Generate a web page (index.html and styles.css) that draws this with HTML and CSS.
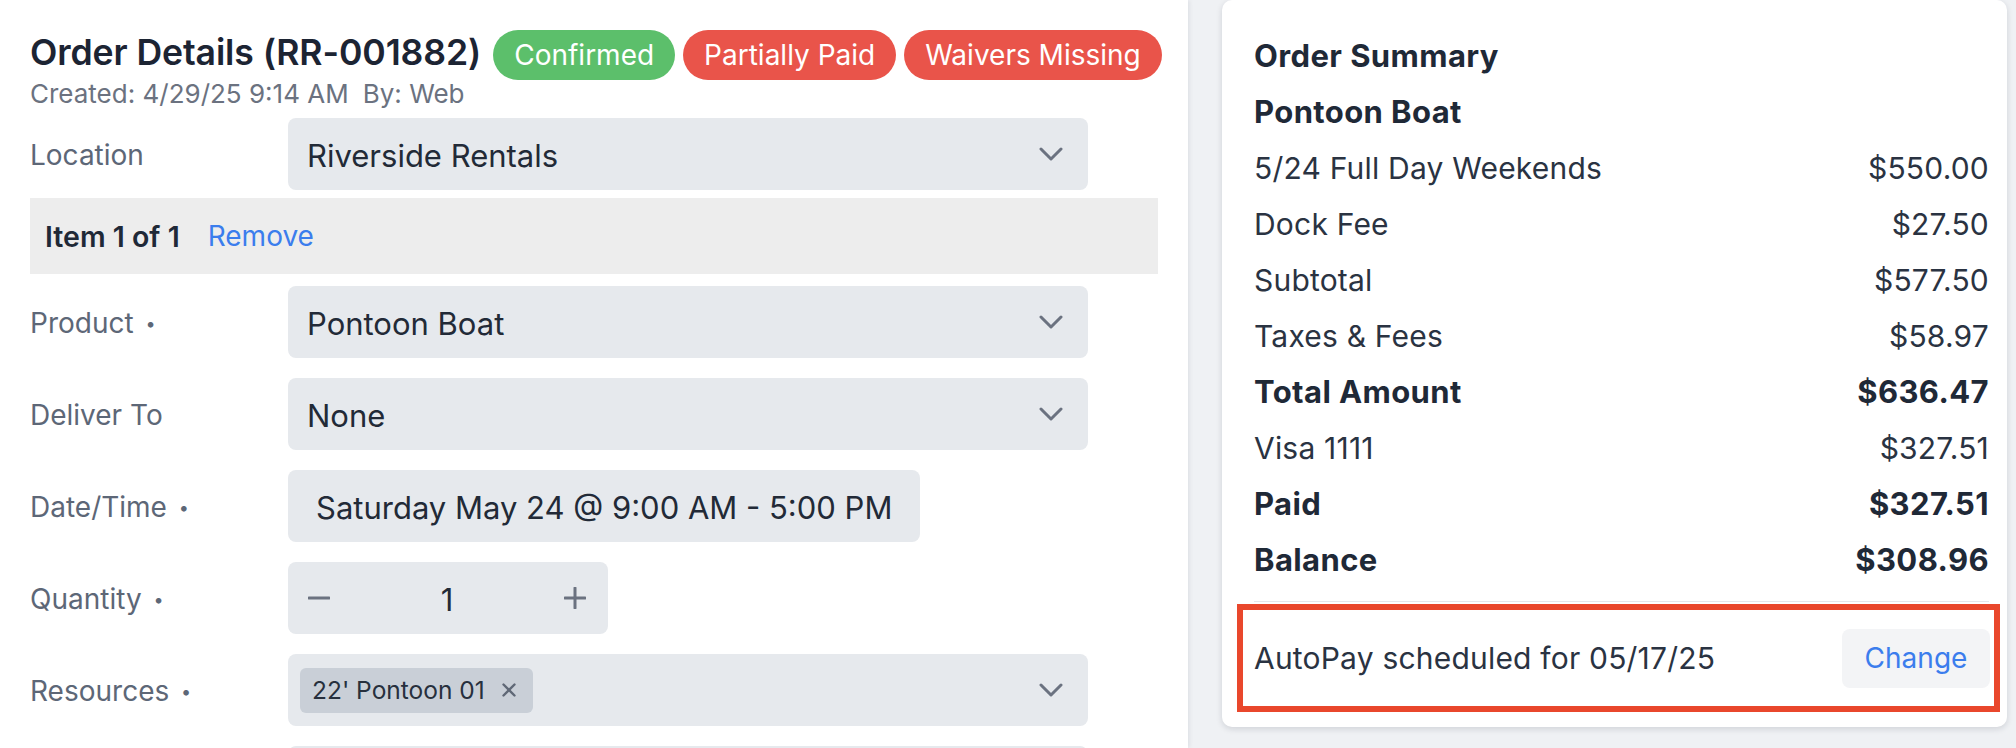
FILE: index.html
```html
<!DOCTYPE html>
<html lang="en">
<head>
<meta charset="utf-8">
<title>Order Details</title>
<link rel="stylesheet" href="styles.css">
</head>
<body>
<div class="page">
  <main class="details">
    <header class="head">
      <div class="title-row">
        <h1 class="title">Order Details (RR-001882)</h1>
        <span class="pill pill-green">Confirmed</span>
        <span class="pill pill-red">Partially Paid</span>
        <span class="pill pill-red">Waivers Missing</span>
      </div>
      <div class="meta">Created: 4/29/25 9:14 AM<span class="meta-by">By: Web</span></div>
    </header>

    <div class="field-row field-first">
      <div class="label">Location</div>
      <div class="select select-wide">
        <span class="value">Riverside Rentals</span>
        <svg class="chev" viewBox="0 0 24 14" width="24" height="14"><polyline points="2,2 12,12 22,2"/></svg>
      </div>
    </div>

    <div class="item-bar">
      <span class="item-title">Item 1 of 1</span>
      <span class="link">Remove</span>
    </div>

    <div class="field-row field-after-item">
      <div class="label">Product <span class="req">•</span></div>
      <div class="select select-wide">
        <span class="value">Pontoon Boat</span>
        <svg class="chev" viewBox="0 0 24 14" width="24" height="14"><polyline points="2,2 12,12 22,2"/></svg>
      </div>
    </div>

    <div class="field-row">
      <div class="label">Deliver To</div>
      <div class="select select-wide">
        <span class="value">None</span>
        <svg class="chev" viewBox="0 0 24 14" width="24" height="14"><polyline points="2,2 12,12 22,2"/></svg>
      </div>
    </div>

    <div class="field-row">
      <div class="label">Date/Time <span class="req">•</span></div>
      <div class="select select-date">
        <span class="value">Saturday May 24 @ 9:00 AM - 5:00 PM</span>
      </div>
    </div>

    <div class="field-row">
      <div class="label">Quantity <span class="req">•</span></div>
      <div class="select stepper">
        <svg class="step-icon" viewBox="0 0 22 22" width="22" height="22"><line x1="1" y1="11" x2="21" y2="11"/></svg>
        <span class="value qty">1</span>
        <svg class="step-icon" viewBox="0 0 22 22" width="22" height="22"><line x1="1" y1="11" x2="21" y2="11"/><line x1="11" y1="1" x2="11" y2="21"/></svg>
      </div>
    </div>

    <div class="field-row">
      <div class="label">Resources <span class="req">•</span></div>
      <div class="select select-wide select-chips">
        <span class="chip">22' Pontoon 01
          <svg class="chip-x" viewBox="0 0 16 16" width="16" height="16"><line x1="2.5" y1="2.5" x2="13.5" y2="13.5"/><line x1="13.5" y1="2.5" x2="2.5" y2="13.5"/></svg>
        </span>
        <svg class="chev" viewBox="0 0 24 14" width="24" height="14"><polyline points="2,2 12,12 22,2"/></svg>
      </div>
    </div>

    <div class="field-row">
      <div class="label"></div>
      <div class="select select-wide"></div>
    </div>
  </main>

  <aside class="side">
    <section class="card">
      <div class="row bold"><span>Order Summary</span></div>
      <div class="row bold"><span>Pontoon Boat</span></div>
      <div class="row"><span>5/24 Full Day Weekends</span><span>$550.00</span></div>
      <div class="row"><span>Dock Fee</span><span>$27.50</span></div>
      <div class="row"><span>Subtotal</span><span>$577.50</span></div>
      <div class="row"><span>Taxes &amp; Fees</span><span>$58.97</span></div>
      <div class="row bold"><span>Total Amount</span><span>$636.47</span></div>
      <div class="row"><span>Visa 1111</span><span>$327.51</span></div>
      <div class="row bold"><span>Paid</span><span>$327.51</span></div>
      <div class="row bold"><span>Balance</span><span>$308.96</span></div>
      <div class="divider"></div>
      <div class="autopay">
        <span class="autopay-text">AutoPay scheduled for 05/17/25</span>
        <span class="change">Change</span>
      </div>
    </section>
  </aside>
</div>
</body>
</html>
```

FILE: styles.css
```css
* {
  box-sizing: border-box;
  margin: 0;
  padding: 0;
}

html, body {
  height: 100%;
}

body {
  font-family: Inter, "Noto Sans", "Liberation Sans", sans-serif;
  background: #eff1f4;
  color: #1f2937;
  overflow: hidden;
}

.page {
  display: flex;
  height: 748px;
}

/* ---------- left: order details ---------- */
.details {
  width: 1188px;
  flex: none;
  background: #ffffff;
  padding: 30px 30px 0 30px;
  box-shadow: 1px 0 5px rgba(15, 23, 42, 0.09);
  position: relative;
  z-index: 1;
  overflow: hidden;
}

.title-row {
  display: flex;
  align-items: baseline;
  gap: 8px;
  height: 50px;
}

.title {
  flex: none;
  white-space: nowrap;
  font-size: 35.6px;
  font-weight: 600;
  line-height: 1;
  color: #1c2433;
  margin-right: 4px;
  letter-spacing: -0.1px;
}

.pill {
  flex: none;
  display: inline-block;
  height: 50px;
  line-height: 50px;
  padding: 0 21px;
  border-radius: 25px;
  font-size: 28px;
  color: #ffffff;
  white-space: nowrap;
}

.pill-green {
  background: #5cbf6b;
}

.pill-red {
  background: #e9544a;
}

.meta {
  font-size: 26px;
  line-height: 28px;
  color: #6b7280;
}

.meta-by {
  margin-left: 14px;
}

.field-row {
  display: grid;
  grid-template-columns: 258px auto;
  align-items: center;
  height: 72px;
  margin-top: 20px;
}

.field-first {
  margin-top: 10px;
}

.field-after-item {
  margin-top: 12px;
}

.label {
  font-size: 28px;
  color: #5d6777;
  padding-top: 2px;
  white-space: nowrap;
}

.req {
  font-size: 18px;
  vertical-align: 3px;
  margin-left: 4px;
}

.select {
  height: 72px;
  background: #e6e9ed;
  border-radius: 8px;
  display: flex;
  align-items: center;
}

.select-wide {
  width: 800px;
  justify-content: space-between;
  padding: 0 25px 0 19px;
}

.select-date {
  justify-self: start;
  padding: 0 28px;
}

.value {
  font-size: 31px;
  color: #222a37;
  padding-top: 2px;
  white-space: nowrap;
}

.chev {
  fill: none;
  stroke: #6b7280;
  stroke-width: 3;
  stroke-linecap: round;
  stroke-linejoin: round;
  flex: none;
}

.stepper {
  width: 320px;
  justify-content: space-between;
  padding: 0 22px 0 20px;
}

.step-icon {
  stroke: #6b7280;
  stroke-width: 3;
  stroke-linecap: round;
}

.select-chips {
  padding-left: 12px;
}

.chip {
  display: flex;
  align-items: center;
  gap: 16px;
  height: 45px;
  padding: 0 16px 0 12px;
  background: #c9cfd7;
  border-radius: 6px;
  font-size: 24.5px;
  color: #27303d;
  white-space: nowrap;
}

.chip-x {
  stroke: #5f6876;
  stroke-width: 2.4;
  stroke-linecap: round;
}

.item-bar {
  display: flex;
  align-items: center;
  gap: 28px;
  height: 76px;
  margin-top: 8px;
  padding-left: 15px;
  background: #ededed;
}

.item-title {
  font-size: 28.5px;
  font-weight: 600;
  color: #1f2937;
}

.link {
  font-size: 28px;
  color: #3b7ded;
}

/* ---------- right: order summary ---------- */
.side {
  flex: 1;
  padding: 0 9px 0 34px;
}

.card {
  height: 727px;
  background: #ffffff;
  border-radius: 10px;
  box-shadow: 0 2px 6px rgba(15, 23, 42, 0.14);
  padding: 28px 18px 15px 32px;
}

.row {
  display: flex;
  justify-content: space-between;
  height: 56px;
  line-height: 56px;
  font-size: 30px;
  letter-spacing: 0.2px;
  color: #2a3342;
  white-space: nowrap;
}

.row.bold {
  font-size: 31px;
  font-weight: 700;
  letter-spacing: 0.4px;
  color: #1f2937;
}

.divider {
  height: 1px;
  background: #e5e7eb;
  margin: 13px 0 2px;
}

.autopay {
  height: 108px;
  margin: 0 -11px 0 -17px;
  border: 6px solid #e9472c;
  display: flex;
  align-items: center;
  justify-content: space-between;
  padding: 0 4px 0 11px;
}

.autopay-text {
  font-size: 30px;
  letter-spacing: 0.2px;
  color: #2a3342;
  white-space: nowrap;
}

.change {
  width: 148px;
  height: 59px;
  background: #f3f4f6;
  border-radius: 8px;
  display: flex;
  align-items: center;
  justify-content: center;
  font-size: 28px;
  color: #3b7ded;
}
```
